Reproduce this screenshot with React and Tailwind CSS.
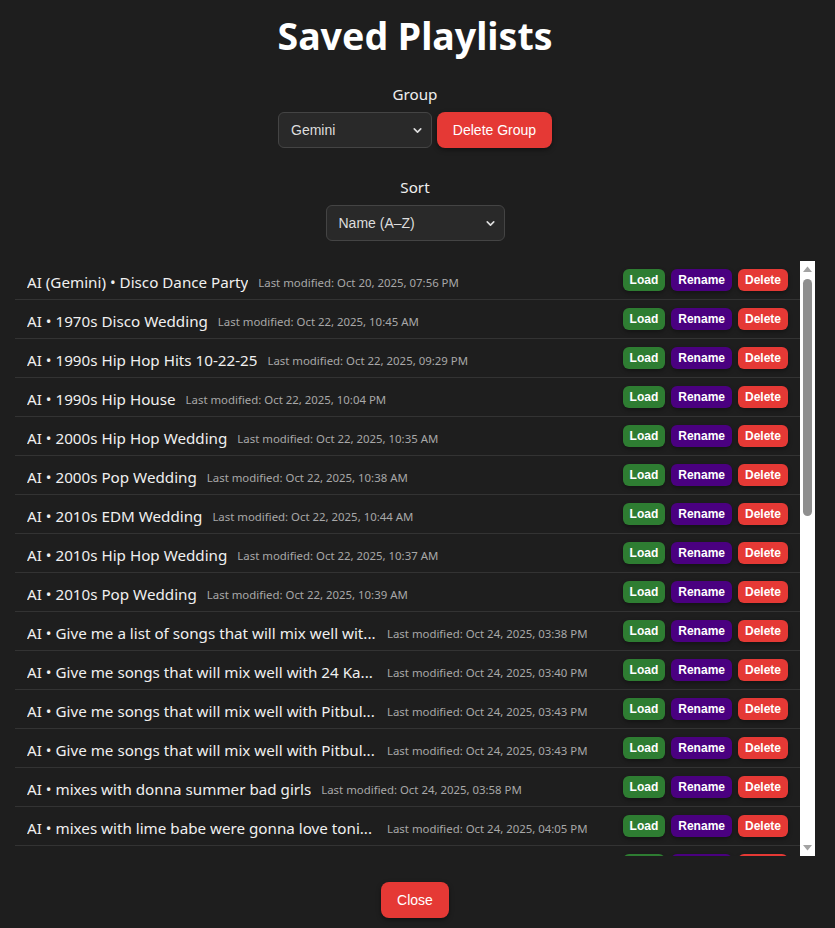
import { ChevronDown } from 'lucide-react'

const playlists = [
  { name: 'AI (Gemini) • Disco Dance Party', modified: 'Oct 20, 2025, 07:56 PM' },
  { name: 'AI • 1970s Disco Wedding', modified: 'Oct 22, 2025, 10:45 AM' },
  { name: 'AI • 1990s Hip Hop Hits 10-22-25', modified: 'Oct 22, 2025, 09:29 PM' },
  { name: 'AI • 1990s Hip House', modified: 'Oct 22, 2025, 10:04 PM' },
  { name: 'AI • 2000s Hip Hop Wedding', modified: 'Oct 22, 2025, 10:35 AM' },
  { name: 'AI • 2000s Pop Wedding', modified: 'Oct 22, 2025, 10:38 AM' },
  { name: 'AI • 2010s EDM Wedding', modified: 'Oct 22, 2025, 10:44 AM' },
  { name: 'AI • 2010s Hip Hop Wedding', modified: 'Oct 22, 2025, 10:37 AM' },
  { name: 'AI • 2010s Pop Wedding', modified: 'Oct 22, 2025, 10:39 AM' },
  { name: 'AI • Give me a list of songs that will mix well wit...', modified: 'Oct 24, 2025, 03:38 PM', cut: true },
  { name: 'AI • Give me songs that will mix well with 24 Ka...', modified: 'Oct 24, 2025, 03:40 PM', cut: true },
  { name: 'AI • Give me songs that will mix well with Pitbul...', modified: 'Oct 24, 2025, 03:43 PM', cut: true },
  { name: 'AI • Give me songs that will mix well with Pitbul...', modified: 'Oct 24, 2025, 03:43 PM', cut: true },
  { name: 'AI • mixes with donna summer bad girls', modified: 'Oct 24, 2025, 03:58 PM' },
  { name: 'AI • mixes with lime babe were gonna love toni...', modified: 'Oct 24, 2025, 04:05 PM', cut: true },
  { name: 'AI • mixes with michael jackson rock with you', modified: 'Oct 24, 2025, 04:12 PM' },
  { name: 'AI • Motown Classics Cocktail Hour', modified: 'Oct 25, 2025, 11:02 AM' },
  { name: 'AI • New Jack Swing Throwbacks', modified: 'Oct 25, 2025, 11:20 AM' },
  { name: 'AI • Old School Funk Party', modified: 'Oct 25, 2025, 11:31 AM' },
  { name: 'AI • Latin Pop Dance Floor', modified: 'Oct 25, 2025, 12:04 PM' },
  { name: 'AI • Reggaeton Wedding Reception', modified: 'Oct 25, 2025, 12:15 PM' },
  { name: 'AI • R&B Slow Jams', modified: 'Oct 25, 2025, 01:40 PM' },
  { name: 'AI • Sunset Deep House', modified: 'Oct 26, 2025, 06:12 PM' },
  { name: 'AI • Summer Rooftop Vibes', modified: 'Oct 26, 2025, 06:30 PM' },
  { name: 'AI • Top 40 Warm Up Set', modified: 'Oct 26, 2025, 07:05 PM' },
  { name: 'AI • Wedding Dinner Jazz', modified: 'Oct 27, 2025, 09:14 AM' },
  { name: 'AI • Wedding First Dance Ideas', modified: 'Oct 27, 2025, 09:26 AM' },
  { name: 'AI • Wedding Last Dance Anthems', modified: 'Oct 27, 2025, 09:41 AM' },
  { name: 'AI • Y2K Party Hits', modified: 'Oct 27, 2025, 10:02 AM' },
  { name: 'AI • 80s New Wave Night', modified: 'Oct 27, 2025, 10:30 AM' },
  { name: 'AI • 80s Pop Wedding', modified: 'Oct 27, 2025, 10:48 AM' },
  { name: 'AI • Afrobeats Crowd Pleasers', modified: 'Oct 28, 2025, 02:15 PM' },
  { name: 'AI • Country Line Dance', modified: 'Oct 28, 2025, 02:33 PM' },
  { name: 'AI • Disco House Edits', modified: 'Oct 28, 2025, 03:01 PM' },
  { name: 'AI • Freestyle Classics', modified: 'Oct 28, 2025, 03:22 PM' },
  { name: 'AI • Gospel Brunch', modified: 'Oct 28, 2025, 04:10 PM' },
]

const uiFont = "font-['Noto_Sans','Open_Sans',sans-serif]"
const btnFont = "font-['Liberation_Sans',Arial,sans-serif]"

function SmallButton({ label, color }) {
  return (
    <button
      type="button"
      className={`${btnFont} ${color} h-[22px] px-[7px] rounded-[6px] text-[12px] font-bold text-white leading-none shadow-[0_2px_4px_rgba(0,0,0,0.35)]`}
    >
      {label}
    </button>
  )
}

function DarkSelect({ value, width }) {
  return (
    <div className={`relative ${width} h-[36px]`}>
      <select
        defaultValue={value}
        className={`${btnFont} appearance-none w-full h-full bg-[#292929] border border-[#444] rounded-[6px] pl-[12px] pr-[28px] text-[14px] text-[#ddd] outline-none`}
      >
        <option>{value}</option>
      </select>
      <ChevronDown
        size={13}
        strokeWidth={3}
        className="absolute right-[8px] top-[12px] text-[#ddd] pointer-events-none"
      />
    </div>
  )
}

// drawn copy of the classic light scrollbar next to the list
function ScrollBar() {
  return (
    <div className="w-[15px] shrink-0 bg-white flex flex-col">
      <svg width="15" height="17" viewBox="0 0 15 17" className="shrink-0">
        <polygon points="3,11 12,11 7.5,5.5" fill="#a3a3a3" />
      </svg>
      <div className="mx-[3px] mt-[1px] h-[237px] rounded-full bg-[#8f8f8f]" />
      <div className="flex-1" />
      <svg width="15" height="17" viewBox="0 0 15 17" className="shrink-0">
        <polygon points="3,6 12,6 7.5,11.5" fill="#a3a3a3" />
      </svg>
    </div>
  )
}

export default function App() {
  return (
    <div className={`${uiFont} min-h-[928px] bg-[#1e1e1e] text-[#eee]`}>
      <div className="w-[830px] px-[15px] pt-[12px] flex flex-col items-center">
        <h2 className="text-[37.5px] leading-[48px] font-bold text-white">Saved Playlists</h2>

        <div className="mt-[22px] text-[15.2px] leading-[24px] text-[#eee]">Group</div>
        <div className="mt-[6px] flex gap-[5px]">
          <DarkSelect value="Gemini" width="w-[154px]" />
          <button
            type="button"
            className={`${btnFont} h-[36px] w-[115px] rounded-[8px] bg-[#e53935] text-[14px] text-white shadow-[0_2px_5px_rgba(0,0,0,0.4)]`}
          >
            Delete Group
          </button>
        </div>

        <div className="mt-[27px] text-[15.2px] leading-[24px] text-[#eee]">Sort</div>
        <div className="mt-[6px]">
          <DarkSelect value="Name (A–Z)" width="w-[179px]" />
        </div>

        <div className="mt-[20px] w-full h-[595px] flex">
          <div className="flex-1 min-w-0 overflow-hidden">
            {playlists.map((p, i) => (
              <div
                key={i}
                className="flex items-center h-[39px] pl-[12px] pr-[12px] border-b border-[#333]"
              >
                <span
                  className={`pt-[4px] text-[15.2px] text-[#f0f0f0] truncate shrink-0 ${p.cut ? 'w-[350px]' : 'max-w-[350px]'}`}
                >
                  {p.name}
                </span>
                <span className="pt-[5px] ml-[10px] text-[11.4px] text-[#a8a8a8] whitespace-nowrap">
                  Last modified: {p.modified}
                </span>
                <div className="ml-auto flex gap-[6px]">
                  <SmallButton label="Load" color="bg-[#2e7d32]" />
                  <SmallButton label="Rename" color="bg-[#4a0080]" />
                  <SmallButton label="Delete" color="bg-[#e53935]" />
                </div>
              </div>
            ))}
          </div>
          <ScrollBar />
        </div>

        <button
          type="button"
          className={`${btnFont} mt-[26px] h-[36px] w-[68px] rounded-[8px] bg-[#e53935] text-[14px] text-white shadow-[0_2px_5px_rgba(0,0,0,0.4)]`}
        >
          Close
        </button>
      </div>
    </div>
  )
}
